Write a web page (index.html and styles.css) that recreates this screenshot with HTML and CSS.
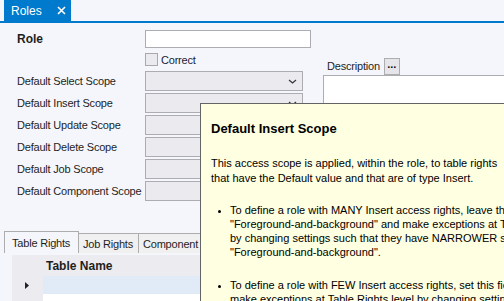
FILE: index.html
```html
<!DOCTYPE html>
<html>
<head>
<meta charset="utf-8">
<link rel="stylesheet" href="styles.css">
</head>
<body>
<div class="app">
  <div class="doctabs">
    <div class="doctab">
      <span>Roles</span>
      <svg class="close" width="9" height="9" viewBox="0 0 9 9"><path d="M1 1 L8 8 M8 1 L1 8" stroke="#fff" stroke-width="1.6" fill="none"/></svg>
    </div>
  </div>

  <div class="form">
    <div class="fields">
      <div class="row role-row">
        <span class="lbl bold">Role</span>
        <div class="textbox"></div>
      </div>
      <div class="row chk-row">
        <span class="lbl"></span>
        <span class="checkbox"></span>
        <span class="chk-text">Correct</span>
      </div>
      <div class="row combo-row first">
        <span class="lbl">Default Select Scope</span>
        <div class="combo"><svg class="chev" width="9" height="5" viewBox="0 0 9 5"><path d="M1 1 L4.5 4 L8 1" stroke="#333" stroke-width="1.2" fill="none"/></svg></div>
      </div>
      <div class="row combo-row">
        <span class="lbl">Default Insert Scope</span>
        <div class="combo"><svg class="chev" width="9" height="5" viewBox="0 0 9 5"><path d="M1 1 L4.5 4 L8 1" stroke="#333" stroke-width="1.2" fill="none"/></svg></div>
      </div>
      <div class="row combo-row">
        <span class="lbl">Default Update Scope</span>
        <div class="combo"></div>
      </div>
      <div class="row combo-row">
        <span class="lbl">Default Delete Scope</span>
        <div class="combo"></div>
      </div>
      <div class="row combo-row">
        <span class="lbl">Default Job Scope</span>
        <div class="combo"></div>
      </div>
      <div class="row combo-row">
        <span class="lbl">Default Component Scope</span>
        <div class="combo"></div>
      </div>
    </div>
    <div class="desc">
      <div class="desc-head">
        <span class="desc-lbl">Description</span>
        <span class="dots-btn">...</span>
      </div>
      <div class="desc-box"></div>
    </div>
  </div>

  <div class="tabstrip">
    <div class="tab selected">Table Rights</div>
    <div class="tab">Job Rights</div>
    <div class="tab">Component Rights</div>
  </div>
  <div class="panel">
    <div class="grid">
      <div class="g-row g-head">
        <div class="g-rh"></div>
        <div class="g-cell bold">Table Name</div>
      </div>
      <div class="g-row g-sel">
        <div class="g-rh"><svg width="4" height="7" viewBox="0 0 4 7"><path d="M0 0 L4 3.5 L0 7 Z" fill="#222"/></svg></div>
        <div class="g-cell"></div>
      </div>
      <div class="g-row g-empty">
        <div class="g-rh"></div>
        <div class="g-cell"></div>
      </div>
    </div>
  </div>

  <div class="tooltip">
    <div class="tt-title">Default Insert Scope</div>
    <p class="tt-para">This access scope is applied, within the role, to table rights<br>that have the Default value and that are of type Insert.</p>
    <ul class="tt-list">
      <li>To define a role with MANY Insert access rights, leave this field at<br>"Foreground-and-background" and make exceptions at Table Rights level<br>by changing settings such that they have NARROWER scope than<br>"Foreground-and-background".</li>
      <li>To define a role with FEW Insert access rights, set this field to "None" and<br>make exceptions at Table Rights level by changing settings such that they</li>
    </ul>
  </div>
</div>
</body>
</html>
```

FILE: styles.css
```css
html, body {
  margin: 0;
  padding: 0;
}
body {
  width: 504px;
  height: 301px;
  overflow: hidden;
  background: #f5f6fb;
  font-family: "Liberation Sans", Arial, sans-serif;
  font-size: 11px;
  color: #1e1e1e;
}
.app {
  position: relative;
  width: 504px;
  height: 301px;
  overflow: hidden;
}
.bold { font-weight: bold; }

.doctabs {
  height: 21px;
  border-bottom: 2px solid #007acc;
  padding-left: 4px;
  display: flex;
}
.doctab {
  width: 67px;
  height: 21px;
  background: #007acc;
  color: #fff;
  font-size: 12px;
  display: flex;
  align-items: center;
  box-sizing: border-box;
  padding-left: 7px;
}
.doctab .close { margin-left: 15px; }

.form {
  display: flex;
  padding: 7px 0 0 17px;
}
.fields {
  width: 294px;
  display: flex;
  flex-direction: column;
}
.row {
  display: flex;
  align-items: center;
}
.lbl {
  width: 128px;
  flex: none;
  letter-spacing: -0.2px;
}
.lbl.bold {
  font-size: 12px;
  letter-spacing: 0;
}
.role-row { height: 18px; }
.textbox {
  width: 166px;
  height: 18px;
  box-sizing: border-box;
  background: #fff;
  border: 1px solid #abadb3;
}
.chk-row {
  height: 13px;
  margin-top: 5px;
}
.checkbox {
  width: 13px;
  height: 13px;
  box-sizing: border-box;
  border: 1px solid #a8a8ad;
  background: #ebebef;
}
.chk-text {
  margin-left: 3px;
  color: #1a1a33;
  letter-spacing: -0.2px;
}
.combo-row {
  height: 20px;
  margin-top: 2px;
}
.combo-row.first { margin-top: 5px; }
.combo {
  width: 158px;
  height: 20px;
  box-sizing: border-box;
  background: #ebebef;
  border: 1px solid #acacb1;
  display: flex;
  align-items: center;
  justify-content: flex-end;
  padding-right: 5px;
}

.desc {
  margin-left: 12px;
  padding-top: 27px;
}
.desc-head {
  display: flex;
  align-items: center;
  height: 18px;
  padding-left: 4px;
}
.desc-lbl { letter-spacing: -0.2px; }
.dots-btn {
  width: 16px;
  height: 17px;
  box-sizing: border-box;
  margin-left: 4px;
  border: 1px solid #adadad;
  background: #e5e5ea;
  font-size: 11px;
  font-weight: bold;
  line-height: 10px;
  text-align: center;
  color: #111;
}
.desc-box {
  width: 220px;
  height: 80px;
  background: #fff;
  border: 1px solid #abadb3;
}

.tabstrip {
  display: flex;
  align-items: flex-end;
  margin-top: 30px;
  margin-left: 4px;
  height: 22px;
}
.tab {
  height: 20px;
  box-sizing: border-box;
  border: 1px solid #adadad;
  border-bottom: none;
  border-left: none;
  background: #f0f0f0;
  padding: 0 4px;
  display: flex;
  align-items: center;
  letter-spacing: -0.2px;
  white-space: nowrap;
}
.tab.selected {
  height: 22px;
  width: 75px;
  border-left: 1px solid #adadad;
  background: #f5f6fb;
  padding-left: 7px;
}
.tab:nth-child(2) { width: 60px; }

.panel {
  padding: 2px 0 0 12px;
}
.grid {
  display: flex;
  flex-direction: column;
}
.g-row {
  display: flex;
}
.g-rh {
  width: 31px;
  flex: none;
  background: #ebebf0;
  display: flex;
  align-items: center;
  padding-left: 13px;
  box-sizing: border-box;
}
.g-cell {
  flex: 1;
  display: flex;
  align-items: center;
  padding-left: 3px;
}
.g-head { height: 21px; }
.g-head .g-cell {
  background: #ebebf0;
  font-size: 12px;
}
.g-sel { height: 18px; }
.g-sel .g-cell { background: #e1ebf8; }
.g-empty { height: 18px; }
.g-empty .g-cell { background: #fff; }

.tooltip {
  position: absolute;
  left: 200px;
  top: 103px;
  width: 330px;
  height: 230px;
  box-sizing: border-box;
  background: #ffffe1;
  border: 1px solid #646464;
  padding: 17px 0 0 10px;
  color: #000;
  white-space: nowrap;
}
.tt-title {
  font-size: 13px;
  font-weight: bold;
  line-height: 16px;
}
.tt-para {
  margin: 19px 0 0;
  line-height: 15px;
}
.tt-list {
  margin: 17px 0 0;
  padding: 0 0 0 19px;
  line-height: 14px;
}
.tt-list li {
  margin-bottom: 19px;
}
.tt-list li::marker {
  font-size: 9px;
}
```
